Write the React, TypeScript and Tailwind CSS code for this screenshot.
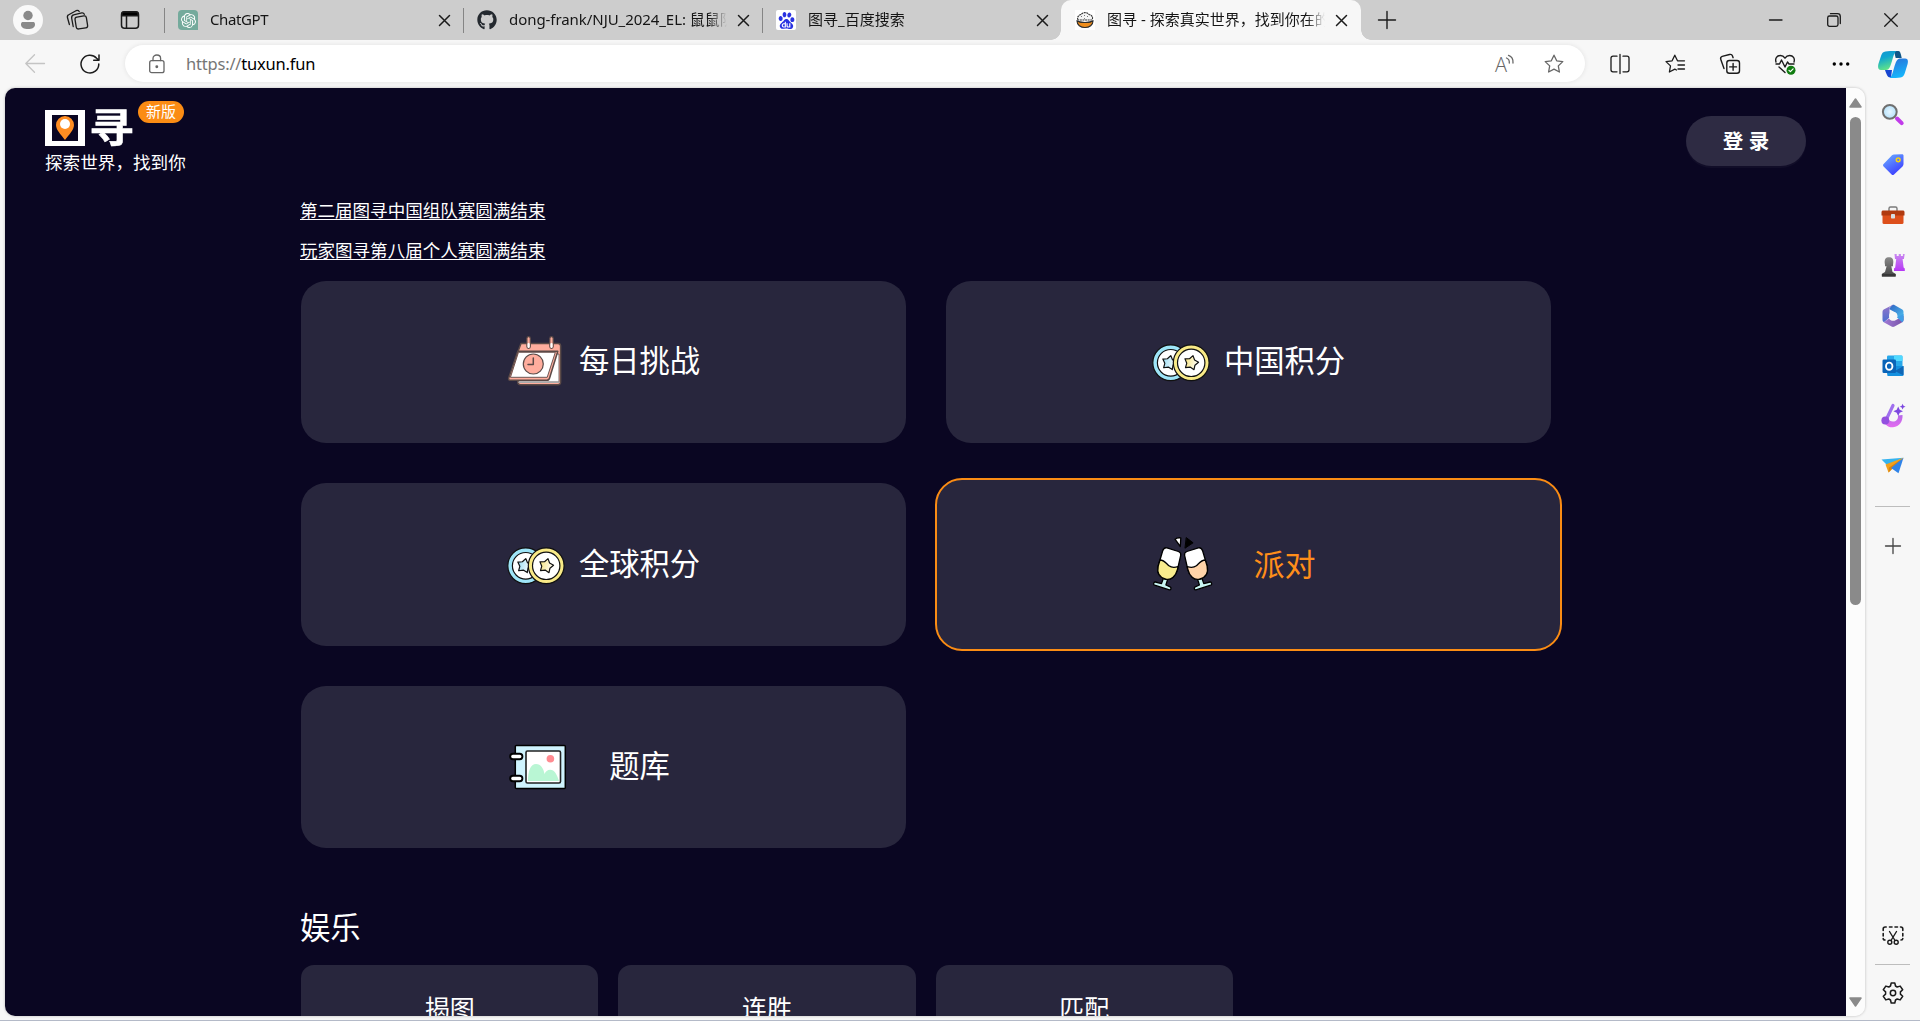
import React from "react";
import { FaGithub } from "react-icons/fa";
import { SiBaidu, SiOpenai } from "react-icons/si";

type P = { children: React.ReactNode };

const Line = ({ size = 20, box = 20, color = "#1b1b1b", sw = 1.3, children }: P & { size?: number; box?: number; color?: string; sw?: number }) => (
  <svg width={size} height={size} viewBox={`0 0 ${box} ${box}`} fill="none" stroke={color} strokeWidth={sw} strokeLinecap="round" strokeLinejoin="round" className="block shrink-0 overflow-visible">
    {children}
  </svg>
);

const Close = () => (
  <Line size={11} box={11} sw={1.5}>
    <path d="M.5 .5 10.5 10.5M10.5 .5 .5 10.5" />
  </Line>
);

function Tab({ icon, title, divider = true, latin = "" }: { icon: React.ReactNode; title: string; divider?: boolean; latin?: string }) {
  return (
    <div className="flex h-10 w-[299px] shrink-0 items-center">
      <div className={divider ? "h-[25px] w-px bg-[#858585]" : "h-[25px] w-px"} />
      <div className="ml-[13px] flex size-5 shrink-0 items-center justify-center">{icon}</div>
      <div className="ml-3 w-[218px] overflow-hidden [mask-image:linear-gradient(to_right,black_200px,transparent_218px)]">
        <span className={"mb-[2px] block whitespace-nowrap text-[15px] leading-5 text-[#151515] " + latin}>{title}</span>
      </div>
      <div className="ml-[11px]"><Close /></div>
    </div>
  );
}

const BowlIcon = () => (
  <svg width="20" height="20" viewBox="0 0 20 20">
    <rect width="20" height="20" fill="#fff" />
    <path d="M3 10C1.500 7 4 5 6 4.500 8 2 12 2 14 4.500c3 .5 4.500 3 3 5.500z" fill="#f5f5f5" stroke="#333" strokeWidth="1.100" strokeDasharray="2 .6" />
    <path d="M6 7l1-1M9 5l1 1M12 7l1-1M9 8.500l1 .3" stroke="#555" strokeWidth=".8" />
    <path d="M2 11c0 4 3.500 6.500 8 6.500s8-2.500 8-6.500c-4 2-12 2-16 0z" fill="#ef8d1c" stroke="#2b2b2b" strokeWidth="1.100" />
    <path d="M2 11c4 2 12 2 16 0" fill="none" stroke="#2b2b2b" strokeWidth="1" />
  </svg>
);

function TabBar() {
  return (
    <div className="flex h-10 w-full shrink-0 items-center bg-[#cdcdcd]">
      <div className="ml-[13px] flex size-[30px] items-center justify-center rounded-full bg-[#f9f9f9]">
        <svg width="16" height="20" viewBox="0 0 16 20" fill="#8a8a8a">
          <circle cx="8" cy="5.500" r="4.700" />
          <path d="M1 14.200C1 12.600 1.900 12 3 12h10c1.100 0 2 .6 2 2.200C15 17.500 12 19 8 19s-7-1.500-7-4.800z" />
        </svg>
      </div>
      <div className="ml-[23px]">
        <Line size={22} box={22}>
          <rect x="9.500" y="7.500" width="11.500" height="12" rx="2.200" transform="rotate(-9 15 13)" />
          <path d="M7.200 17.500 5.700 9.300C5.400 7.600 6 6.400 7.600 5.900l8.200-2c1.200-.2 2 .1 2.500 1.400" />
          <path d="M3.400 15.500 1.500 8.800C1.100 7.300 1.700 6 3.200 5.500L10 1.700c1.500-.6 2.600-.2 3.200 .8" />
        </Line>
      </div>
      <div className="ml-[32px]">
        <Line size={20} box={20} sw={1.500}>
          <rect x="1.500" y="1.700" width="17" height="16.600" rx="3" />
          <path d="M2 4.800V3.500c0-1 .7-1.500 1.500-1.500h13c.8 0 1.500 .5 1.500 1.500v2.300H2z" fill="#000" />
          <path d="M6.500 6v12" />
        </Line>
      </div>
      <div className="ml-[24px] flex h-10">
        <Tab
          icon={<div className="flex size-5 items-center justify-center rounded-[4px] rounded-br-none bg-[#74aa9c]"><SiOpenai size={15} color="#fff" /></div>}
          title="ChatGPT"
          latin="tracking-[-0.4px]"
        />
        <Tab icon={<FaGithub size={20} color="#24292f" />} title="dong-frank/NJU_2024_EL: 鼠鼠队" latin="tracking-[-0.06px]" />
        <Tab icon={<div className="flex size-5 items-center justify-center rounded-[2px] bg-white"><SiBaidu size={17} color="#2932e1" /></div>} title="图寻_百度搜索" />
        <div className="relative h-10 w-[300px] rounded-t-[10px] bg-[#f7f7f7] before:absolute before:bottom-0 before:-left-[10px] before:size-[10px] before:bg-[radial-gradient(circle_at_0_0,#cdcdcd_9.500px,#f7f7f7_10px)] after:absolute after:-right-[10px] after:bottom-0 after:size-[10px] after:bg-[radial-gradient(circle_at_100%_0,#cdcdcd_9.500px,#f7f7f7_10px)]">
          <Tab divider={false} icon={<BowlIcon />} title="图寻 - 探索真实世界，找到你在的" />
        </div>
      </div>
      <div className="ml-[17px]">
        <Line size={18} box={18} sw={1.400}><path d="M9 .5v17M.5 9h17" /></Line>
      </div>
      <div className="mr-[22px] ml-auto flex items-center gap-[43.500px]">
        <Line size={14} box={14}><path d="M.5 7h12.500" /></Line>
        <Line size={14} box={14}>
          <rect x=".7" y="3" width="10.300" height="10.300" rx="1.800" />
          <path d="M3.500 .7h7c1.700 0 2.800 1.100 2.800 2.800v7" />
        </Line>
        <Line size={14} box={14}><path d="M.7 .7l12.600 12.600M13.300 .7.700 13.300" /></Line>
      </div>
    </div>
  );
}

const Slot = ({ children }: P) => <div className="flex h-8 w-[55.300px] shrink-0 items-center justify-center">{children}</div>;

const starPath = "M10 1.200l2.700 5.600 6.100.8-4.500 4.300 1.100 6.100L10 15.100 4.600 18l1.100-6.100L1.200 7.600l6.100-.8z";

function Toolbar() {
  return (
    <div className="flex h-12 w-full shrink-0 items-center bg-[#f7f7f7]">
      <div className="ml-[25px]"><Line color="#c4c4c4"><path d="M19.500 9.500H.8M9.500 .8.800 9.500l8.700 8.700" /></Line></div>
      <div className="ml-[35px]">
        <Line sw={1.500}><path d="M18.800 10A8.900 8.900 0 1 1 16.600 4.200L19 6.300M19 1v5.300h-5.300" /></Line>
      </div>
      <div className="mt-[-1px] ml-[25px] flex h-[37px] w-[1460px] items-center rounded-full bg-white shadow-[0_0_5px_rgba(0,0,0,0.09)]">
        <div className="ml-[22px]">
          <Line color="#666" sw={1.300}>
            <rect x="2.700" y="6.700" width="14.300" height="12" rx="2" />
            <path d="M6 6.500V4.500C6 2.500 7.700 1 9.800 1s3.800 1.500 3.800 3.500v2" />
            <circle cx="9.800" cy="12.800" r=".8" fill="#666" />
          </Line>
        </div>
        <div className="ml-[19px] text-[16.500px] leading-6 tracking-[-0.2px] whitespace-nowrap text-black"><span className="text-[#767676]">https://</span>tuxun.fun</div>
        <div className="relative ml-auto flex size-[22px] items-center font-['Open_Sans'] text-[20px] font-light text-[#666]">
          <span className="mt-[2px]">A</span>
          <div className="absolute top-[2px] left-[11px]">
            <Line size={10} box={10} color="#666"><path d="M.5 3c2 .8 3 2.500 2.800 5M2.500 .3C5.700 1.500 7.300 4.500 7 8" /></Line>
          </div>
        </div>
        <div className="mr-[21px] ml-[27px]"><Line color="#666"><path d={starPath} /></Line></div>
      </div>
      <div className="ml-[7px] flex">
        <Slot>
          <Line>
            <path d="M10 .5v19M7 2.200H3C1.700 2.200 1 3 1 4.200v11.600c0 1.200.7 2 2 2h4M13 2.200h4c1.300 0 2 .8 2 2v11.600c0 1.200-.7 2-2 2h-4" />
          </Line>
        </Slot>
        <Slot>
          <Line>
            <path d="M11.500 16 9.800 15.100 4.400 18l1.100-6.100L1 7.600l6.100-.8L9.800 1.200l2.700 5.600h7M13 11h6.500M13 15h6.500" />
          </Line>
        </Slot>
        <Slot>
          <Line sw={1.400}>
            <rect x="6.800" y="6.500" width="12.700" height="12.700" rx="2.500" />
            <path d="M13.100 9.500v6.800M9.700 12.900h6.800M4 14.500.800 5.500C.3 4 .8 2.900 2.200 2.400L9.500.5c1.500-.4 2.500 0 3 1.500l.6 1.700" />
          </Line>
        </Slot>
        <Slot>
          <Line size={21} box={21} sw={1.400}>
            <path d="M1 8C-.2 4.200 2 1.500 5.300 1.500c2 0 3.600 1 4.700 2.700C11.100 2.500 12.700 1.500 14.700 1.500 18 1.500 20.200 4.200 19 8M1 10h3.500l2-4 3.500 7 2.500-5 1.500 2h5M4 13l6 5.500" />
            <circle cx="16" cy="16.200" r="4.500" fill="#107c10" stroke="none" />
            <path d="M14 16.300l1.400 1.400 2.700-2.800" stroke="#fff" strokeWidth="1.200" />
          </Line>
        </Slot>
        <Slot>
          <svg width="18" height="4" viewBox="0 0 18 4"><circle cx="2.300" cy="2" r="1.700" /><circle cx="9" cy="2" r="1.700" /><circle cx="15.700" cy="2" r="1.700" /></svg>
        </Slot>
      </div>
      <svg className="mr-[12px] ml-auto" width="30" height="27" viewBox="0 0 30 27">
        <defs>
          <linearGradient id="cpA" x1="0" y1="0" x2="0.300" y2="1"><stop offset="0" stopColor="#1295d0" /><stop offset=".4" stopColor="#0ea5d0" /><stop offset="1" stopColor="#5ee28a" /></linearGradient>
          <linearGradient id="cpB" x1="0" y1="0" x2="0.300" y2="1"><stop offset="0" stopColor="#2a6fd8" /><stop offset="1" stopColor="#16b4fb" /></linearGradient>
        </defs>
        <path d="M16 0h4.500c1.800 0 2.500 3.500 3.200 7h-6z" fill="#0e5688" />
        <path d="M7 19h7l-1 7.500C9.500 27 8.500 23 7 19z" fill="#1745d0" />
        <path d="M7.500.5C10 0 14 0 18.500 0 16 1.500 15.500 5 14 10c-1.800 6-3 9-6 9H3C0 19-.3 16 .4 13L3 5C3.900 2.200 5 .8 7.500 .5z" fill="url(#cpA)" />
        <path d="M22.500 26.500c-2.500.5-6.500.5-11 .5 2.500-1.500 3-5 4.500-10 1.800-6 3-9.500 6-9.500h5c3 0 3.300 2.500 2.600 5.500L27 21.500c-.9 2.800-2 4.700-4.500 5z" fill="url(#cpB)" />
      </svg>
    </div>
  );
}

const Pic = ({ children }: P) => (
  <svg width="24" height="24" viewBox="0 0 24 24" className="block shrink-0 overflow-visible">{children}</svg>
);

function Sidebar() {
  return (
    <div className="mr-[10px] flex w-[35px] shrink-0 flex-col items-center">
      <div className="mt-[15px] flex flex-col items-center gap-[26.200px]">
        <Pic>
          <defs><radialGradient id="lens"><stop offset="0" stopColor="#e6f6ff" /><stop offset="1" stopColor="#b5e1fa" /></radialGradient></defs>
          <path d="M16 15.500l4.700 4.700" stroke="#c13bea" strokeWidth="4" strokeLinecap="round" />
          <circle cx="8.800" cy="8.800" r="6.900" fill="url(#lens)" stroke="#6f6f6f" strokeWidth="2" />
        </Pic>
        <Pic>
          <defs><linearGradient id="tag" x1="0" y1="0" x2=".6" y2="1"><stop offset="0" stopColor="#6db4ff" /><stop offset="1" stopColor="#3c3eff" /></linearGradient></defs>
          <path d="M13 1.500l8-.2c1 0 1.500.5 1.500 1.500V11c0 1-.3 1.700-1 2.400l-8.500 8.100c-.8.800-1.600.8-2.400 0l-8-8c-.8-.8-.7-1.600 0-2.400L11 2.300c.6-.5 1.200-.8 2-.8z" fill="url(#tag)" />
          <circle cx="17.200" cy="6.800" r="1.900" fill="none" stroke="#f6d312" strokeWidth="1.500" />
        </Pic>
        <Pic>
          <path d="M8 8V5.500C8 4.500 8.500 4 9.500 4h5c1 0 1.500.5 1.500 1.500V8" fill="none" stroke="#7b7b7b" strokeWidth="1.400" />
          <rect x="1.500" y="9" width="21" height="12" rx="1.500" fill="#dd4f1b" />
          <path d="M2.200 7.500h19.600c1 0 1.700.6 1.700 1.500v3.500H.5V9c0-.9.700-1.500 1.700-1.500z" fill="#b03a10" />
          <rect x="10" y="11" width="4" height="4.500" rx=".7" fill="#d7dfe2" />
        </Pic>
        <Pic>
          <defs>
            <linearGradient id="rook" x1="0" y1="0" x2="0" y2="1"><stop offset="0" stopColor="#c98af0" /><stop offset="1" stopColor="#b637f5" /></linearGradient>
            <linearGradient id="pawn" x1="0" y1="0" x2="0" y2="1"><stop offset="0" stopColor="#8a8a8a" /><stop offset="1" stopColor="#444" /></linearGradient>
          </defs>
          <path d="M13.500 0h2.200v2h2V0h2.200v2h2V0h1.800l-.8 5h-1.300l1 8.500 1.200 1V17H13v-2.500l1.200-1 1-8.500H14z" fill="url(#rook)" />
          <path d="M4 10.700C2.800 5 5 3.200 8 3.200s5.200 1.800 4 7.500v1.500h-1.700L11.500 18l3 1.700v2.800H1v-2.800L4 18l1.600-5.800H4z" fill="url(#pawn)" />
          <path d="M.8 20h13.900v2.500H.8z" fill="#383838" />
        </Pic>
        <Pic>
          <defs>
            <linearGradient id="m1" x1="0" y1="0" x2="1" y2="1"><stop offset="0" stopColor="#2e61c2" /><stop offset="1" stopColor="#50c8f2" /></linearGradient>
            <linearGradient id="m2" x1="0" y1="0" x2="0" y2="1"><stop offset="0" stopColor="#9673c9" /><stop offset="1" stopColor="#4a6fd0" /></linearGradient>
            <linearGradient id="m3" x1="0" y1="0" x2="1" y2="0"><stop offset="0" stopColor="#a07ad5" /><stop offset="1" stopColor="#7853a8" /></linearGradient>
          </defs>
          <path d="M11 1.200c1-.5 1.800-.5 2.800 0l7.500 4.300c.8.500 1.200 1.200 1.200 2.200v8.500l-6-3.500c0-2-.4-3.200-2-4.200L8 5z" fill="url(#m1)" />
          <path d="M12.500.8 8.500 3.500v10L3 18.200c-1-.6-1.500-1.300-1.500-2.400V7.700c0-1 .4-1.700 1.200-2.200L11 1.200z" fill="url(#m2)" />
          <path d="M8 14.500c1.500 2.500 4.500 3 7 1.500l7.500-4v4c0 1-.4 1.700-1.200 2.200L13.500 22.600c-1 .6-2 .6-3 0L2.700 18.200z" fill="url(#m3)" />
          <path d="M22.500 10v6c0 1-.4 1.700-1.200 2.200l-5.500-5z" fill="#3f9fe7" />
          <circle cx="12" cy="12" r="4" fill="#f7f7f7" />
        </Pic>
        <Pic>
          <rect x="6" y="1.500" width="15.500" height="18" rx="1.300" fill="#28a8ea" />
          <path d="M13 1.500h7.200c.8 0 1.300.5 1.300 1.300V7H13z" fill="#50d9ff" />
          <path d="M5 12h17.500v8.500c0 .9-.6 1.500-1.500 1.500H6.500z" fill="#1490df" />
          <path d="M22.500 12 14 17l8.500 4.500z" fill="#1066b5" />
          <rect x="1.500" y="5.500" width="13.500" height="13.500" rx="1.300" fill="#0a64b8" />
          <ellipse cx="8.200" cy="12.200" rx="3.200" ry="3.600" fill="none" stroke="#fff" strokeWidth="1.900" />
        </Pic>
        <Pic>
          <defs><linearGradient id="brush" x1="0" y1="0" x2="0" y2="1"><stop offset="0" stopColor="#b469e8" /><stop offset="1" stopColor="#e56bf0" /></linearGradient></defs>
          <path d="M2.500 15c.5 5.500 4.500 8.800 9.500 8.300 6.500-.5 10-6.300 9.500-12.300l-4.500.5c.3 4-2 6-5 6-2.500 0-4-1-5-3z" fill="url(#brush)" />
          <path d="M12 1.500 6 14" stroke="#a070ee" strokeWidth="3.200" strokeLinecap="round" />
          <circle cx="4.300" cy="16.500" r="3.900" fill="#9350df" />
          <path d="M17.200 2.500l1.500 3.300L22 7.300l-3.300 1.500-1.500 3.300-1.500-3.300-3.300-1.500 3.300-1.500zM21.600-.2l.9 2 2 .9-2 .9-.9 2-.9-2-2-.9 2-.9z" fill="#7d48e0" />
        </Pic>
        <Pic>
          <path d="M.5 5.500 22.500 3.800 7 12z" fill="#35b3ef" />
          <path d="M22.500 3.800 4.500 10.500l3 8z" fill="#f2a11d" />
          <path d="M22.500 3.800 8 13.500l-.5 5 3.500-3.500z" fill="#d98410" />
          <path d="M22.500 3.800 10 14l7.500 5.300z" fill="#2f83e8" />
        </Pic>
      </div>
      <div className="mt-[28px] h-px w-full bg-[#bdbdbd]" />
      <div className="mt-[31px]"><Line size={16} box={16} color="#444"><path d="M8 .5v15M.5 8h15" /></Line></div>
      <div className="mt-auto mb-[17px]">
        <Line size={22} box={22} sw={1.600}>
          <path d="M1.200 5.500V4c0-1.200.8-2 2-2h1M7.500 2h2.500M13 2h2.500M18.500 2h.3c1.200 0 2 .8 2 2v1.500M1.200 8.500V11M20.800 8.500V11M1.200 13.500c0 1 .6 1.500 1.800 1.500M20.800 13.500c0 1-.6 1.500-1.800 1.500" />
          <path d="M7.500 6.500l5.500 9M14.500 6.500l-5.500 9" strokeWidth="1.400" />
          <circle cx="7.800" cy="17.200" r="2" strokeWidth="1.400" /><circle cx="14.200" cy="17.200" r="2" strokeWidth="1.400" />
        </Line>
      </div>
      <div className="h-px w-full bg-[#bdbdbd]" />
      <div className="mt-[17px] mb-[16px]">
        <Line size={22} box={22} sw={1.500}>
          <circle cx="11" cy="11" r="2.700" />
          <path d="M9.200 1h3.600l.7 3 1.700 1 3-.9 2.500 3.600-2.300 2.200v2.200l2.300 2.200-2.500 3.600-3-.9-1.700 1-.7 3H9.200l-.7-3-1.700-1-3 .9-2.500-3.600 2.300-2.200V9.900L1.300 7.700l2.500-3.600 3 .9 1.700-1z" />
        </Line>
      </div>
    </div>
  );
}

const Art = ({ children }: P) => (
  <svg width="60" height="60" viewBox="0 0 60 60" className="block shrink-0 overflow-visible" strokeLinejoin="round" strokeLinecap="round">{children}</svg>
);

const Calendar = () => (
  <Art>
    <path d="M15 11.500h37c1.800 0 2.600 1 2.600 2.600V50c0 1.800-.8 2.700-2.600 2.700H14.500c-1.800 0-2.700-1-2.700-2.700V20z" fill="#ffad9d" stroke="#5b4a47" strokeWidth="1.500" />
    <path d="M13 22h40v28H13z" fill="#fff" stroke="#5b4a47" strokeWidth=".8" />
    <path d="M13 50.300h40" stroke="#aaa" strokeWidth="1.500" />
    <path d="M11.800 19.300h40L43.600 46c-.5 1.800-1.200 2.300-2.800 2.300H4.500c-1.700 0-2.200-1-1.700-2.600z" fill="#ffad9d" stroke="#5b4a47" strokeWidth="1.500" />
    <path d="M12.800 20.300h36.500L41.200 45.300H4.800z" fill="#fff" stroke="#5b4a47" strokeWidth=".9" />
    <circle cx="27.300" cy="32" r="10" fill="#ffad9d" stroke="#5b4a47" strokeWidth="1.200" />
    <path d="M27.300 26v6.500H22" fill="none" stroke="#5b4a47" strokeWidth="1.500" />
    <rect x="20.900" y="4.700" width="3.400" height="11.600" rx="1.700" fill="#ffad9d" stroke="#5b4a47" strokeWidth="1.200" />
    <rect x="43.800" y="4.700" width="3.400" height="11.600" rx="1.700" fill="#ffad9d" stroke="#5b4a47" strokeWidth="1.200" />
    <path d="M22.600 12v3M45.500 12v3" stroke="#fff" strokeWidth="2.200" />
  </Art>
);

const coinStar = "M0-7.400 2.600-3.600 7-2.300 4.200 1.400 4.400 6 0 4.400-4.400 6-4.200 1.400-7-2.300-2.600-3.600z";

const Coins = () => (
  <Art>
    <defs>
      <linearGradient id="sb"><stop offset="0" stopColor="#9adcf2" /><stop offset="1" stopColor="#fff" /></linearGradient>
      <linearGradient id="sy"><stop offset="0" stopColor="#f7e37a" /><stop offset="1" stopColor="#fff" /></linearGradient>
    </defs>
    <g stroke="#111" strokeWidth="1.200">
      <circle cx="19.700" cy="30.800" r="17.900" fill="#9ee5f8" />
      <circle cx="19.700" cy="30.800" r="13.300" fill="#fff" />
      <path d={coinStar} transform="translate(18.200 30.800) rotate(12)" fill="url(#sb)" />
      <circle cx="40.200" cy="30.800" r="17.900" fill="#f9ea87" />
      <circle cx="40.200" cy="30.800" r="13.700" fill="#fff" />
      <path d={coinStar} transform="translate(40.200 30.800) rotate(14)" fill="url(#sy)" />
    </g>
  </Art>
);

const Glass = ({ fill }: { fill: string }) => (
  <g stroke="#000" strokeWidth="1.300">
    <path d="M12.300 43.500 10.500 48.600 4.300 47c-1.800-.2-2.300 2.600-.7 3.200l14.800 4.700c1.700.2 2.200-2.300.7-3l-4.200-1.900 1.700-5.500z" fill="#c9f6f3" />
    <path d="M16 12.900 27.400 16.500c2.200.8 2.700 2 2.300 3.800L26.500 34.500c-1.700 6.500-6.200 11-11.700 9.600C8 42.300 5.800 37.500 7.200 31l4.500-15.200c.8-2.500 2-3.500 4.300-2.900z" fill="#fff" />
    <path d="M9 25c4 0 6 3 9 5.800 2.500 2 6 1.700 9 .9L26.500 34.500c-1.700 6.500-6.200 11-11.700 9.600C8 42.300 5.800 37.500 7.200 31z" fill={fill} />
  </g>
);

const Cheers = () => (
  <Art>
    <Glass fill="#f9ec8d" />
    <g transform="translate(63.300 0) scale(-1 1)"><Glass fill="#ffd3a8" /></g>
    <path d="M24 4.200c1.500-1.200 3.800-1.700 5.800-1.300L29.300 11.500z" fill="#fff" stroke="#000" strokeWidth="1.300" />
    <path d="M35.500 2.800l6.600 5-7.800 5.200z" stroke="#000" />
  </Art>
);

const Album = () => (
  <Art>
    <rect x="9.300" y="8.600" width="50" height="42.800" rx="1" fill="#cff3fd" stroke="#000" strokeWidth="1.500" />
    <rect x="20" y="14" width="34.500" height="32" rx="1.500" fill="#fff" stroke="#222" strokeWidth="1.600" />
    <path d="M22 44c0-10 2.500-17 8-17 5 0 7.500 4.500 8.500 10 1-2.500 3-4.200 5.700-4.200C48.500 33 50.800 37 53 44z" fill="#b9f6d4" />
    <circle cx="44.400" cy="21.800" r="3.800" fill="#ff8b91" />
    <rect x="4.200" y="16.800" width="12.200" height="5.400" rx="2.700" fill="#fff" stroke="#000" strokeWidth="1.900" />
    <rect x="4.200" y="38.800" width="12.200" height="5.400" rx="2.700" fill="#fff" stroke="#000" strokeWidth="1.900" />
  </Art>
);

function ModeCard({ icon, label, active = false }: { icon: React.ReactNode; label: string; active?: boolean }) {
  return (
    <div className={active
      ? "-mx-[11px] -my-[5px] flex items-center justify-center rounded-[27px] border-2 border-[#fb8c14] bg-[#28263d] text-[31px] text-[#ff8e1a]"
      : "flex items-center justify-center rounded-[25px] bg-[#28263d] text-[30.300px] text-white"}>
      {icon}
      <span className="mb-[2px] ml-[12px] w-[123px] text-center leading-10">{label}</span>
    </div>
  );
}

function Logo() {
  return (
    <div className="flex flex-col">
      <div className="flex h-[45px]">
        <div className="mt-[9px] flex h-9 w-10 items-center justify-center border-x-[7px] border-y-[5px] border-white">
          <svg width="18" height="24" viewBox="0 0 18 24">
            <path d="M9 0a9 9 0 0 1 9 9c0 5-5 9.500-9 15C5 18.500 0 14 0 9a9 9 0 0 1 9-9z" fill="#ff8e22" />
            <circle cx="9" cy="8" r="5" fill="#fff" />
          </svg>
        </div>
        <span className="mt-[8px] ml-[4px] block h-[36px] w-[45px] origin-left scale-x-[1.120] text-[40px] leading-[36px] font-bold text-white [-webkit-text-stroke:0.500px_white]">寻</span>
        <span className="ml-1 h-[22px] w-[46px] rounded-full bg-[#fb8c14] text-center text-[15px] leading-[20px] text-white">新版</span>
      </div>
      <span className="mt-[3px] text-[17.600px] leading-[26px] whitespace-nowrap text-white">探索世界，找到你</span>
    </div>
  );
}

function GamePage() {
  return (
    <div className="flex min-w-0 flex-1 flex-col overflow-hidden bg-[#0a0622]">
      <div className="flex h-[103px] shrink-0 items-start justify-between pt-[13px] pr-10 pl-10">
        <Logo />
        <button className="mt-[15px] h-[50px] w-[120px] rounded-full bg-[#2e2b43] text-[20.500px] font-bold text-white shadow-[0_2px_0_rgba(255,255,255,0.03)]">登 录</button>
      </div>
      <div className="ml-[296px] flex w-[1250px] flex-col text-white">
        <a className="-ml-px h-10 text-[17.550px] leading-[39px] underline decoration-1 underline-offset-2">第二届图寻中国组队赛圆满结束</a>
        <a className="-ml-px h-10 text-[17.550px] leading-[39px] underline decoration-1 underline-offset-2">玩家图寻第八届个人赛圆满结束</a>
        <div className="mt-[10px] grid auto-rows-[162.400px] grid-cols-2 gap-10">
          <ModeCard icon={<Calendar />} label="每日挑战" />
          <ModeCard icon={<Coins />} label="中国积分" />
          <ModeCard icon={<Coins />} label="全球积分" />
          <ModeCard icon={<Cheers />} label="派对" active />
          <ModeCard icon={<Album />} label="题库" />
        </div>
        <h2 className="mt-[60px] -ml-px text-[30.300px] leading-10">娱乐</h2>
        <div className="mt-[17px] flex gap-5">
          {["揭图", "连胜", "匹配"].map((t) => (
            <div key={t} className="flex h-[88px] w-[297.300px] items-center justify-center rounded-[13px] bg-[#28263d] text-[25px]">{t}</div>
          ))}
        </div>
      </div>
    </div>
  );
}

export default function App() {
  return (
    <div className="flex h-[1021px] w-[1920px] flex-col overflow-hidden border-b border-[#b4bac8] bg-[#f7f7f7] font-['Noto_Sans','Noto_Sans_CJK_SC',sans-serif]">
      <TabBar />
      <Toolbar />
      <div className="flex min-h-0 flex-1">
        <div className="mb-1 ml-[5px] flex w-[1860px] overflow-hidden rounded-[10px] shadow-[0_0_3px_rgba(0,0,0,0.25)]">
          <GamePage />
          <div className="flex w-[19px] shrink-0 flex-col items-center bg-[#fcfcfc]">
            <svg className="mt-[10px]" width="13" height="10" viewBox="0 0 13 10"><path d="M6.500 1 12 9H1z" fill="#8a8a8a" stroke="#8a8a8a" strokeWidth="1.500" strokeLinejoin="round" /></svg>
            <div className="mt-[9px] h-[488px] w-[11px] rounded-full bg-[#8a8a8a]" />
            <svg className="mt-auto mb-[9px]" width="13" height="10" viewBox="0 0 13 10"><path d="M6.500 9 12 1H1z" fill="#8a8a8a" stroke="#8a8a8a" strokeWidth="1.500" strokeLinejoin="round" /></svg>
          </div>
        </div>
        <div className="ml-auto flex"><Sidebar /></div>
      </div>
    </div>
  );
}
